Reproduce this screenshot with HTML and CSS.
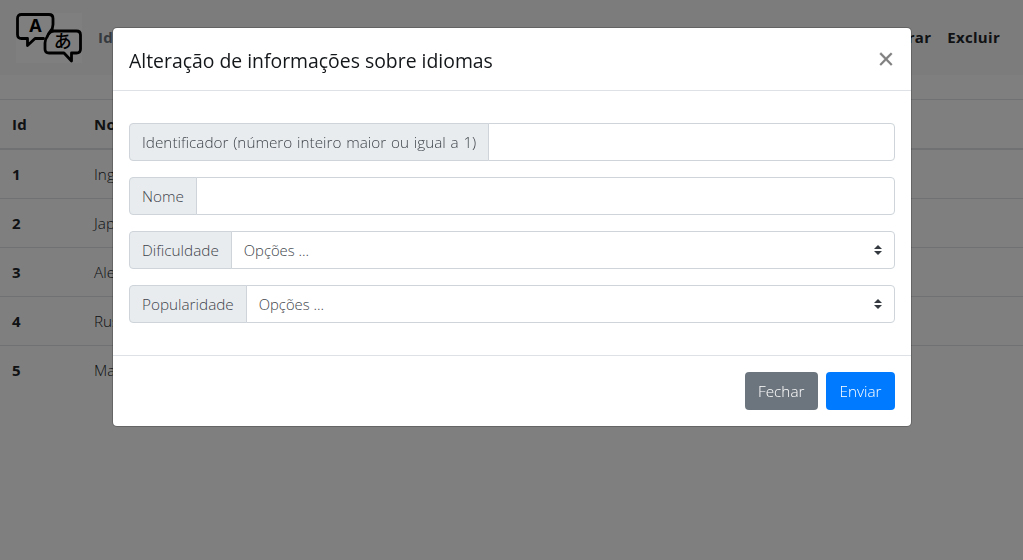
FILE: index.html
```html
<!DOCTYPE html>
<html lang="pt-BR">
<head>
<meta charset="utf-8">
<title>Idiomas</title>
<link rel="stylesheet" href="styles.css">
</head>
<body>
<nav class="navbar">
  <svg class="logo" width="66" height="50" viewBox="0 0 66 50" aria-hidden="true">
    <rect class="logo-bg" width="66" height="50"/>
    <path class="bubble" d="M27.500 25.500H19L11.500 32.500V25.500H5.500Q1.500 25.500 1.500 21.500V5.500Q1.500 1.500 5.500 1.500H33Q37 1.500 37 5.500V11.500Q37 15.500 34.500 18Q32.500 20.500 31.500 23"/>
    <path class="bubble" d="M37 18H60.500Q64.500 18 64.500 22V36Q64.500 40 60.500 40H55.500V48L48 40H33Q29 40 29 36V30Q29 26.500 31 24"/>
    <path class="bubble" d="M37 18Q34 18.500 33 20.500"/>
    <text class="logo-a" x="19.500" y="18.500" text-anchor="middle">A</text>
    <text class="logo-jp" x="47" y="34.500" text-anchor="middle">あ</text>
  </svg>
  <a class="nav-title" href="#">Idiomas</a>
  <div class="nav-actions">
    <a href="#">Incluir</a>
    <a href="#">Alterar</a>
    <a href="#">Excluir</a>
  </div>
</nav>
<table class="table">
  <thead>
    <tr><th class="col-id">Id</th><th>Nome</th></tr>
  </thead>
  <tbody>
    <tr><th class="col-id">1</th><td>Inglês</td></tr>
    <tr><th class="col-id">2</th><td>Japonês</td></tr>
    <tr><th class="col-id">3</th><td>Alemão</td></tr>
    <tr><th class="col-id">4</th><td>Russo</td></tr>
    <tr><th class="col-id">5</th><td>Mandarim</td></tr>
  </tbody>
</table>
<div class="backdrop"></div>
<div class="modal">
  <header class="modal-header">
    <h5 class="modal-title">Alteração de informações sobre idiomas</h5>
    <button class="close" type="button">×</button>
  </header>
  <div class="modal-body">
    <form class="form">
      <div class="input-group">
        <span class="addon">Identificador (número inteiro maior ou igual a 1)</span>
        <input class="control" type="text">
      </div>
      <div class="input-group">
        <span class="addon">Nome</span>
        <input class="control" type="text">
      </div>
      <div class="input-group">
        <span class="addon">Dificuldade</span>
        <div class="control select"><span>Opções ...</span>
          <svg class="arrows" width="8" height="10" viewBox="0 0 8 10"><path d="M4 0L8 4H0ZM0 6H8L4 10Z"/></svg>
        </div>
      </div>
      <div class="input-group">
        <span class="addon">Popularidade</span>
        <div class="control select"><span>Opções ...</span>
          <svg class="arrows" width="8" height="10" viewBox="0 0 8 10"><path d="M4 0L8 4H0ZM0 6H8L4 10Z"/></svg>
        </div>
      </div>
    </form>
  </div>
  <footer class="modal-footer">
    <button class="btn btn-gray" type="button">Fechar</button>
    <button class="btn btn-blue" type="button">Enviar</button>
  </footer>
</div>
</body>
</html>
```
FILE: styles.css
```css
* { box-sizing: border-box; }
html, body { margin: 0; height: 100%; }
body {
  font-family: "Open Sans", "Liberation Sans", sans-serif;
  font-size: 15.300px;
  font-weight: 300;
  word-spacing: .8px;
  line-height: 24px;
  color: #212529;
  background: #fff;
  overflow: hidden;
}
a { color: inherit; text-decoration: none; }
.navbar {
  display: flex;
  align-items: center;
  height: 75px;
  padding: 0 23px 2px 16px;
  background: #f8f9fa;
  font-size: 15px;
  font-weight: 700;
  letter-spacing: .3px;
  margin-bottom: 24px;
}
.logo { flex: none; margin-top: 2px; }
.logo-bg { fill: #fff; }
.bubble { fill: none; stroke: #000; stroke-width: 2.800; stroke-linejoin: round; stroke-linecap: round; }
.logo-a { font: 700 18px "Open Sans", sans-serif; fill: #000; }
.logo-jp { font: 500 18px "Noto Sans CJK JP", sans-serif; fill: #000; }
.nav-title { margin-left: 16px; color: #6c757d; }
.nav-actions { margin-left: auto; display: flex; gap: 16px; color: #212529; }
.table { width: 100%; border-collapse: collapse; }
.table th, .table td {
  height: 49px;
  padding: 12px;
  text-align: left;
  border-top: 1px solid #dee2e6;
  vertical-align: middle;
}
.table th { font-size: 15px; font-weight: 700; letter-spacing: .3px; }
.table thead th { border-bottom: 2px solid #dee2e6; }
.table .col-id { width: 82px; }
.backdrop {
  position: fixed;
  inset: 0;
  background: rgba(0, 0, 0, .5);
}
.modal {
  position: absolute;
  top: 27px;
  left: 112px;
  width: 800px;
  background: #fff;
  border: 1px solid rgba(0, 0, 0, .2);
  border-radius: 5px;
  background-clip: padding-box;
  color: #212529;
}
.modal-header {
  display: flex;
  justify-content: space-between;
  align-items: flex-start;
  height: 63px;
  padding: 16px;
  border-bottom: 1px solid #dee2e6;
}
.modal-title {
  margin: 2px 0 0;
  font-size: 19.400px;
  font-weight: 500;
  line-height: 30px;
  word-spacing: 0;
  color: #14171a;
}
.close {
  border: 0;
  padding: 0;
  margin: 0;
  background: none;
  font: 400 29px/30px "Liberation Sans", sans-serif;
  -webkit-text-stroke: .15px #000;
  color: #000;
  opacity: .5;
  width: 18px;
}
.modal-body { padding: 16px; }
.form { padding-top: 16px; }
.input-group { display: flex; height: 38px; margin-bottom: 16px; }
.addon {
  display: flex;
  align-items: center;
  padding: 0 12px;
  color: #3e454b;
  background: #e9ecef;
  border: 1px solid #ced4da;
  border-radius: 4px 0 0 4px;
  white-space: nowrap;
}
.control {
  flex: 1;
  min-width: 0;
  margin-left: -1px;
  border: 1px solid #ced4da;
  border-radius: 0 4px 4px 0;
  background: #fff;
  color: #3e454b;
  font: inherit;
  padding: 0 12px;
}
.select {
  display: flex;
  align-items: center;
  justify-content: space-between;
  font-size: 14.800px;
  word-spacing: 0;
}
.arrows { fill: #343a40; flex: none; }
.modal-footer {
  display: flex;
  justify-content: flex-end;
  gap: 8px;
  padding: 16px;
  border-top: 1px solid #dee2e6;
}
.btn {
  height: 38px;
  padding: 0 12.500px;
  border: 1px solid transparent;
  border-radius: 4px;
  font: inherit;
  color: #fff;
}
.btn-gray { background: #6c757d; }
.btn-blue { background: #007bff; }
```
